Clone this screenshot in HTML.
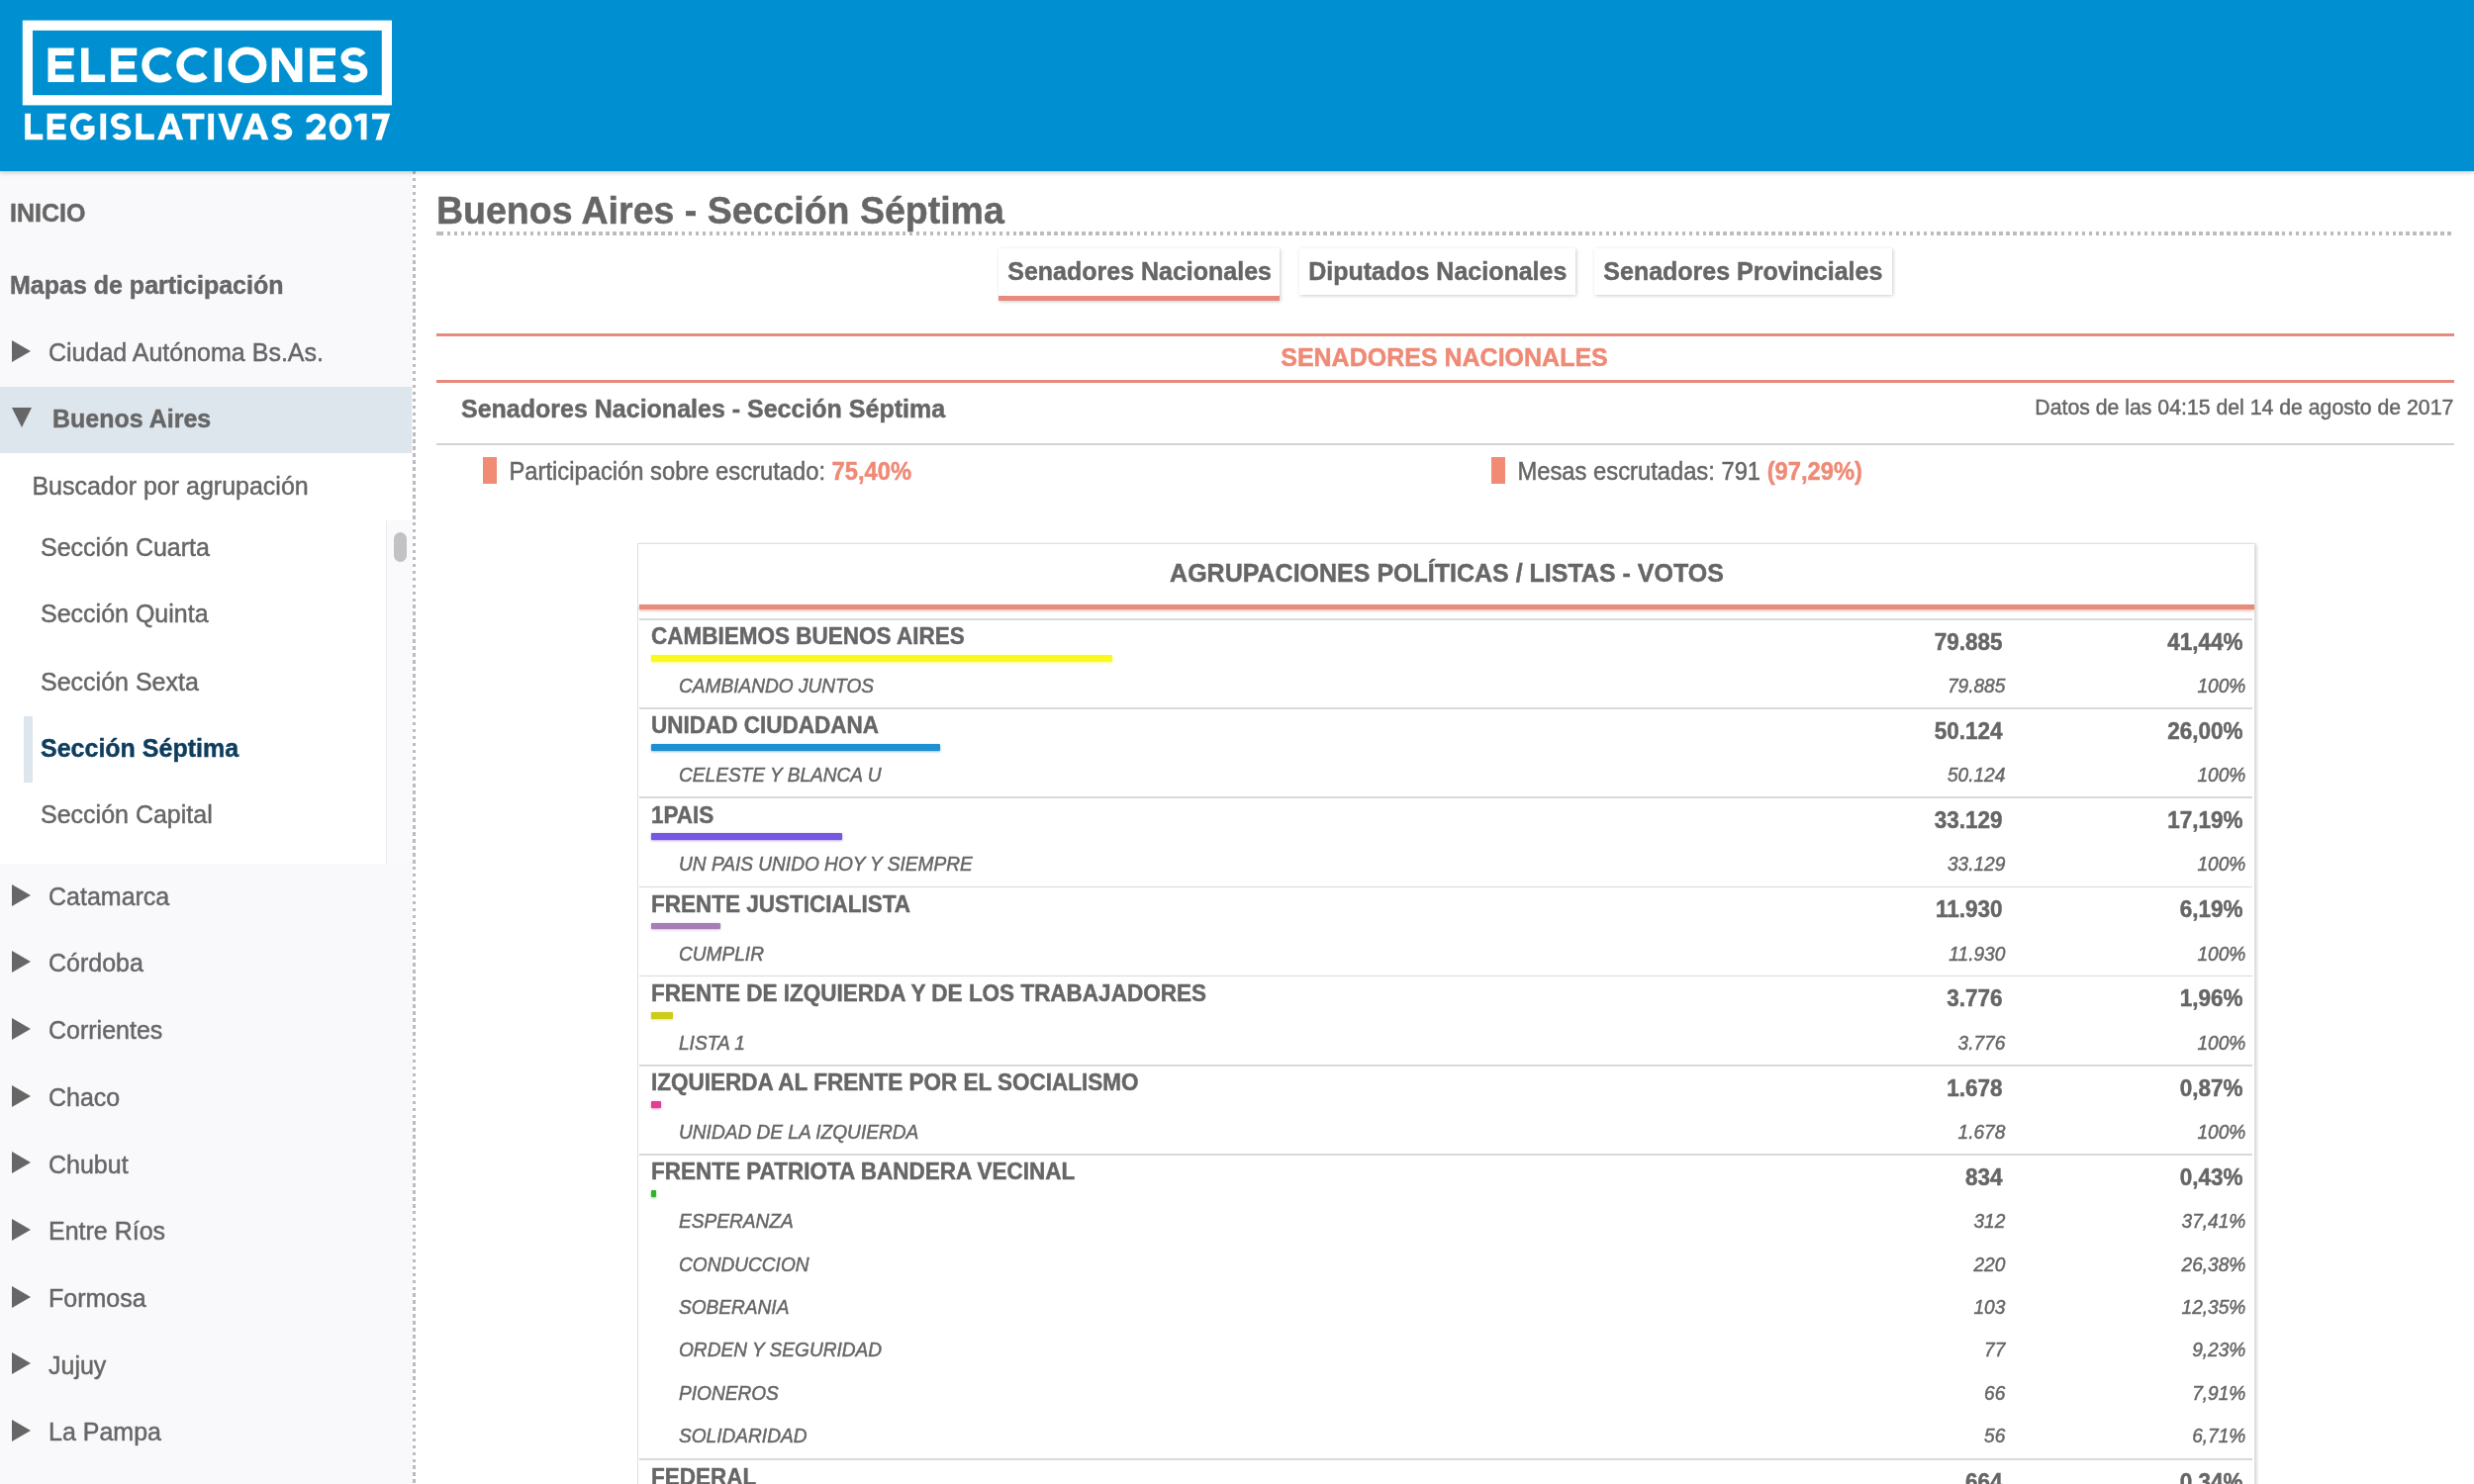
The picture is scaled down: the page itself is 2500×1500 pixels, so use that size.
<!DOCTYPE html>
<html><head><meta charset="utf-8"><title>Elecciones Legislativas 2017</title>
<style>
*{box-sizing:border-box;margin:0;padding:0}
html,body{width:2500px;height:1500px;overflow:hidden;background:#fff}
#wrap{position:absolute;left:0;top:0;width:2500px;height:1500px;overflow:hidden;will-change:transform;transform:translateZ(0)}
body{font-family:"Liberation Sans",sans-serif;color:#666666;position:relative}
.abs{position:absolute;white-space:pre}
.abs,.sb,.pv,.sec,.gname,.lname,.num,.inum,.tt{transform:scaleY(1.05);-webkit-text-stroke:0.45px}
.tt{display:inline-block}
#hdr{position:absolute;left:0;top:0;width:2500px;height:173px;background:#0090d1;box-shadow:0 1px 5px rgba(0,0,0,.25);z-index:5}
#side{position:absolute;left:0;top:173px;width:416.6px;height:1327px;background:#f9f8fb}
#sdot{position:absolute;left:416.6px;top:172.5px;width:3.5px;height:1330px;background:repeating-linear-gradient(to bottom,#bcbbbf 0,#bcbbbf 3.5px,transparent 3.5px,transparent 6.96px)}
.sb{position:absolute;left:10px;font-size:25px;font-weight:bold;height:40px;line-height:40px;white-space:pre}
.pv{position:absolute;left:49px;font-size:25px;height:40px;line-height:40px;white-space:pre}
.tri{position:absolute;left:11.8px;width:0;height:0;border-left:19px solid #666;border-top:11.4px solid transparent;border-bottom:11.4px solid transparent}
.sec{position:absolute;left:41px;font-size:25px;height:40px;line-height:40px;white-space:pre}
#sub{position:absolute;left:0;top:458px;width:416px;height:415px;background:#fff}
#track{position:absolute;left:390px;top:526px;width:26.6px;height:347px;background:#faf9fb;border-left:1.8px solid #eae9ed}
#thumb{position:absolute;left:397.6px;top:537.7px;width:13.4px;height:30px;border-radius:6.7px;background:#c2c1c6}
#main{position:absolute;left:441px;top:173px;width:2037px}
.tab{position:absolute;top:250.5px;height:47.8px;line-height:47.4px;background:#fff;font-size:25px;font-weight:bold;text-align:center;box-shadow:1px 1px 3.5px rgba(0,0,0,.2);white-space:pre}
.sline{position:absolute;left:441px;width:2038.5px;height:3.2px;background:#e68a7c}
.gname{position:absolute;left:658px;font-size:22.5px;font-weight:bold;height:30px;line-height:30px;white-space:pre}
.lname{position:absolute;left:686px;font-size:19.1px;font-style:italic;height:30px;line-height:30px;white-space:pre}
.num{position:absolute;font-size:22.5px;font-weight:bold;height:30px;line-height:30px;white-space:pre;text-align:right;width:200px}
.inum{position:absolute;font-size:19.1px;font-style:italic;height:30px;line-height:30px;white-space:pre;text-align:right;width:200px}
.bar{position:absolute;left:657.6px;height:6.8px;border-radius:1px}
.gl{position:absolute;left:645.5px;width:1630.5px;height:1.7px;background:#d9d9dd}
</style></head>
<body>
<div id="wrap">
<div id="hdr"><svg width="420" height="173" viewBox="0 0 420 173" style="position:absolute;left:0;top:0;filter:blur(0.6px)"><rect x="27.9" y="25.7" width="363" height="75.6" fill="none" stroke="#fff" stroke-width="10.2"/><path fill="none" stroke="#fff" stroke-width="7.4" stroke-linejoin="miter" d="M74.7 52.2H52.2V79.2H74.7M52.2 65.7H72.34"/><path fill="none" stroke="#fff" stroke-width="7.4" d="M85.8 48.5V79.2H106.1"/><path fill="none" stroke="#fff" stroke-width="7.4" stroke-linejoin="miter" d="M138.3 52.2H115.9V79.2H138.3M115.9 65.7H135.95"/><path fill="none" stroke="#fff" stroke-width="7.4" d="M171.5 55.39A14.57 14.1 0 1 0 171.5 76.01"/><path fill="none" stroke="#fff" stroke-width="7.4" d="M207.3 55.39A15.04 14.1 0 1 0 207.3 76.01"/><path fill="none" stroke="#fff" stroke-width="7.4" d="M220.4 48.5V82.9"/><ellipse fill="none" stroke="#fff" stroke-width="7.4" cx="249.95" cy="65.7" rx="15.75" ry="14.5"/><path fill="#fff" d="M274.7 48.5H283.41L298 71.55V48.5H305.4V82.9H296.69L282.1 59.85V82.9H274.7Z"/><path fill="none" stroke="#fff" stroke-width="7.4" stroke-linejoin="miter" d="M339 52.2H316.9V79.2H339M316.9 65.7H336.68"/><path fill="none" stroke="#fff" stroke-width="7.4" d="M366.38 55.64A9.55 7.05 0 1 0 357.95 65.7A9.55 7.05 0 1 1 349.52 75.76"/><svg x="0" y="110" width="420" height="31.4" viewBox="0 110 420 31.4" overflow="hidden"><path fill="none" stroke="#fff" stroke-width="5.8" d="M28.1 114.8V138.5H43.3"/><path fill="none" stroke="#fff" stroke-width="5.8" stroke-linejoin="miter" d="M66.7 117.7H50.5V138.5H66.7M50.5 128.1H64.98"/><path fill="none" stroke="#fff" stroke-width="5.8" stroke-linejoin="miter" d="M91.47 120.74A10.14 11 0 1 0 92.6 134.15V129.84H84.44"/><path fill="none" stroke="#fff" stroke-width="5.8" d="M104.3 114.8V141.4"/><path fill="none" stroke="#fff" stroke-width="5.8" d="M128.47 120.32A7.1 5.5 0 1 0 122.2 128.1A7.1 5.5 0 1 1 115.93 135.88"/><path fill="none" stroke="#fff" stroke-width="5.8" d="M140.2 114.8V138.5H155.8"/><path fill="#fff" fill-rule="evenodd" d="M158.9 141.4H165.4L172.1 121.98L178.8 141.4H185.3L175.15 114.8H169.06Z"/><path fill="#fff" d="M167.51 130.76H176.69L178.57 135.69H165.63Z"/><path fill="none" stroke="#fff" stroke-width="5.8" d="M184.1 117.7H206.5M195.3 117.7V141.4"/><path fill="none" stroke="#fff" stroke-width="5.8" d="M213.2 114.8V141.4"/><path fill="#fff" d="M220.2 114.8H226.7L232.8 134.22L238.9 114.8H245.4L235.84 141.4H229.76Z"/><path fill="#fff" fill-rule="evenodd" d="M244.8 141.4H251.3L258.1 121.98L264.9 141.4H271.4L261.15 114.8H255.06Z"/><path fill="#fff" d="M253.45 130.76H262.75L264.65 135.69H251.55Z"/><path fill="none" stroke="#fff" stroke-width="5.8" d="M291.35 120.32A7.25 5.5 0 1 0 284.95 128.1A7.25 5.5 0 1 1 278.55 135.88"/><path fill="none" stroke="#fff" stroke-width="5.8" d="M312.2 123.51A7 5.81 0 1 1 325.54 125.97Q324.04 128.47 312.9 140.2"/><path fill="none" stroke="#fff" stroke-width="5.8" d="M309.6 138.5H329.1"/><ellipse fill="none" stroke="#fff" stroke-width="5.8" cx="344.05" cy="128.1" rx="8.45" ry="10.8"/><path fill="none" stroke="#fff" stroke-width="5.8" stroke-linejoin="miter" d="M358.9 120.7L364.7 117.7H367.6V141.4"/><path fill="none" stroke="#fff" stroke-width="5.8" stroke-linejoin="miter" d="M376 117.7H390.25L381.58 144.4"/></svg></svg></div>
<div id="side"></div><div id="sdot"></div>
<div class="sb" style="top:195.0px">INICIO</div>
<div class="sb" style="top:268.0px">Mapas de participación</div>
<div class="tri" style="top:343.6px"></div><div class="pv" style="top:336.0px">Ciudad Autónoma Bs.As.</div>
<div style="position:absolute;left:0;top:391px;width:416px;height:67px;background:#dde5ed"></div>
<div style="position:absolute;left:11.8px;top:411.8px;width:0;height:0;border-top:20.3px solid #666;border-left:10.4px solid transparent;border-right:10.4px solid transparent"></div>
<div class="pv" style="left:53px;font-weight:bold;top:403.3px">Buenos Aires</div>
<div id="sub"></div><div id="track"></div><div id="thumb"></div>
<div class="sec" style="left:32.4px;top:470.5px">Buscador por agrupación</div>
<div class="sec" style="top:533.1px">Sección Cuarta</div>
<div class="sec" style="top:600.3px">Sección Quinta</div>
<div class="sec" style="top:668.5px">Sección Sexta</div>
<div style="position:absolute;left:24px;top:724px;width:9px;height:67px;background:#dde5ed"></div>
<div class="sec" style="top:736.2px;font-weight:bold;color:#0e3d5e">Sección Séptima</div>
<div class="sec" style="top:803.2px">Sección Capital</div>
<div class="tri" style="top:893.5000000000001px"></div><div class="pv" style="top:885.7px">Catamarca</div>
<div class="tri" style="top:961.2000000000002px"></div><div class="pv" style="top:953.4000000000001px">Córdoba</div>
<div class="tri" style="top:1028.9px"></div><div class="pv" style="top:1021.1000000000001px">Corrientes</div>
<div class="tri" style="top:1096.6000000000001px"></div><div class="pv" style="top:1088.8000000000002px">Chaco</div>
<div class="tri" style="top:1164.3px"></div><div class="pv" style="top:1156.5px">Chubut</div>
<div class="tri" style="top:1232.0px"></div><div class="pv" style="top:1224.2px">Entre Ríos</div>
<div class="tri" style="top:1299.7px"></div><div class="pv" style="top:1291.9px">Formosa</div>
<div class="tri" style="top:1367.4px"></div><div class="pv" style="top:1359.6000000000001px">Jujuy</div>
<div class="tri" style="top:1435.1000000000001px"></div><div class="pv" style="top:1427.3000000000002px">La Pampa</div>
<div class="abs" style="left:441px;top:186.5px;height:50px;line-height:50px;font-size:37.5px;font-weight:bold">Buenos Aires - Sección Séptima</div>
<div style="position:absolute;left:444.5px;top:234.3px;width:2035px;height:3.6px;background:repeating-linear-gradient(to right,#bcbbbf 0,#bcbbbf 3.5px,transparent 3.5px,transparent 6.97px)"></div><div style="position:absolute;left:441.2px;top:234.3px;width:4px;height:3.6px;background:#bcbbbf"></div>
<div class="tab" style="left:1008.8px;width:284.7px;height:53.2px;padding-left:1px;border-bottom:5.4px solid #e88a80"><span class="tt">Senadores Nacionales</span></div>
<div class="tab" style="left:1313.2px;width:279.2px"><span class="tt">Diputados Nacionales</span></div>
<div class="tab" style="left:1610.6px;width:301.5px"><span class="tt">Senadores Provinciales</span></div>
<div class="sline" style="top:337px"></div><div class="sline" style="top:384px"></div>
<div class="abs" style="left:441px;width:2037px;text-align:center;top:341px;height:40px;line-height:40px;font-size:25px;font-weight:bold;color:#ef8a76">SENADORES NACIONALES</div>
<div class="abs" style="left:466px;top:392.6px;height:40px;line-height:40px;font-size:25px;font-weight:bold">Senadores Nacionales - Sección Séptima</div>
<div class="abs" style="left:1979.3px;width:500px;text-align:right;top:391.5px;height:40px;line-height:40px;font-size:21.25px">Datos de las 04:15 del 14 de agosto de 2017</div>
<div style="position:absolute;left:441px;top:448px;width:2038.5px;height:1.8px;background:#d3d3d6"></div>
<div style="position:absolute;left:488px;top:462.3px;width:14px;height:27px;background:#f18b73"></div>
<div class="abs" style="left:514.5px;top:456.7px;height:40px;line-height:40px;font-size:23.75px">Participación sobre escrutado: <b style="color:#ef8a76">75,40%</b></div>
<div style="position:absolute;left:1507px;top:462.3px;width:14px;height:27px;background:#f18b73"></div>
<div class="abs" style="left:1533.5px;top:456.7px;height:40px;line-height:40px;font-size:23.75px">Mesas escrutadas: 791 <b style="color:#ef8a76">(97,29%)</b></div>
<div style="position:absolute;left:644.2px;top:548.8px;width:1634.6px;height:1000px;border:1.7px solid #dedee2;box-shadow:1.5px 1px 3px rgba(0,0,20,.16)"></div>
<div class="abs" style="left:646px;width:1632px;text-align:center;top:558.7px;height:40px;line-height:40px;font-size:25px;font-weight:bold">AGRUPACIONES POLÍTICAS / LISTAS - VOTOS</div>
<div style="position:absolute;left:646px;top:610.9px;width:1631.5px;height:4.8px;background:#e38d7a;box-shadow:0 1.5px 2.5px rgba(240,140,125,.55)"></div>
<div class="gl" style="top:625.0px"></div>
<div class="gname" style="top:629.2px">CAMBIEMOS BUENOS AIRES</div>
<div class="bar" style="top:662.0px;width:466.4px;background:#fbf81f;box-shadow:0 0.8px 2.5px rgba(251,248,31,.6)"></div>
<div class="num" style="left:1823.6px;top:634.6px">79.885</div>
<div class="num" style="left:2066.5px;top:634.6px">41,44%</div>
<div class="lname" style="top:679.0px">CAMBIANDO JUNTOS</div>
<div class="inum" style="left:1826.3px;top:679.0px">79.885</div>
<div class="inum" style="left:2069.3px;top:679.0px">100%</div>
<div class="gl" style="top:715.2px"></div>
<div class="gname" style="top:719.4px">UNIDAD CIUDADANA</div>
<div class="bar" style="top:752.2px;width:292.8px;background:#1e90d2;box-shadow:0 0.8px 2.5px rgba(30,144,210,.6)"></div>
<div class="num" style="left:1823.6px;top:724.8px">50.124</div>
<div class="num" style="left:2066.5px;top:724.8px">26,00%</div>
<div class="lname" style="top:769.2px">CELESTE Y BLANCA U</div>
<div class="inum" style="left:1826.3px;top:769.2px">50.124</div>
<div class="inum" style="left:2069.3px;top:769.2px">100%</div>
<div class="gl" style="top:805.4px"></div>
<div class="gname" style="top:809.6px">1PAIS</div>
<div class="bar" style="top:842.4px;width:193.8px;background:#7657e0;box-shadow:0 0.8px 2.5px rgba(118,87,224,.6)"></div>
<div class="num" style="left:1823.6px;top:815.0px">33.129</div>
<div class="num" style="left:2066.5px;top:815.0px">17,19%</div>
<div class="lname" style="top:859.4px">UN PAIS UNIDO HOY Y SIEMPRE</div>
<div class="inum" style="left:1826.3px;top:859.4px">33.129</div>
<div class="inum" style="left:2069.3px;top:859.4px">100%</div>
<div class="gl" style="top:895.6px"></div>
<div class="gname" style="top:899.8px">FRENTE JUSTICIALISTA</div>
<div class="bar" style="top:932.6px;width:70.2px;background:#a77db6;box-shadow:0 0.8px 2.5px rgba(167,125,182,.6)"></div>
<div class="num" style="left:1823.6px;top:905.2px">11.930</div>
<div class="num" style="left:2066.5px;top:905.2px">6,19%</div>
<div class="lname" style="top:949.6px">CUMPLIR</div>
<div class="inum" style="left:1826.3px;top:949.6px">11.930</div>
<div class="inum" style="left:2069.3px;top:949.6px">100%</div>
<div class="gl" style="top:985.8px"></div>
<div class="gname" style="top:990.0px">FRENTE DE IZQUIERDA Y DE LOS TRABAJADORES</div>
<div class="bar" style="top:1022.8px;width:22.6px;background:#cdcb1e;box-shadow:0 0.8px 2.5px rgba(205,203,30,.6)"></div>
<div class="num" style="left:1823.6px;top:995.4px">3.776</div>
<div class="num" style="left:2066.5px;top:995.4px">1,96%</div>
<div class="lname" style="top:1039.8px">LISTA 1</div>
<div class="inum" style="left:1826.3px;top:1039.8px">3.776</div>
<div class="inum" style="left:2069.3px;top:1039.8px">100%</div>
<div class="gl" style="top:1076.0px"></div>
<div class="gname" style="top:1080.2px">IZQUIERDA AL FRENTE POR EL SOCIALISMO</div>
<div class="bar" style="top:1113.0px;width:10.4px;background:#e03f92;box-shadow:0 0.8px 2.5px rgba(224,63,146,.6)"></div>
<div class="num" style="left:1823.6px;top:1085.6px">1.678</div>
<div class="num" style="left:2066.5px;top:1085.6px">0,87%</div>
<div class="lname" style="top:1130.0px">UNIDAD DE LA IZQUIERDA</div>
<div class="inum" style="left:1826.3px;top:1130.0px">1.678</div>
<div class="inum" style="left:2069.3px;top:1130.0px">100%</div>
<div class="gl" style="top:1166.2px"></div>
<div class="gname" style="top:1170.4px">FRENTE PATRIOTA BANDERA VECINAL</div>
<div class="bar" style="top:1203.2px;width:5.4px;background:#2fb42c;box-shadow:0 0.8px 2.5px rgba(47,180,44,.6)"></div>
<div class="num" style="left:1823.6px;top:1175.8px">834</div>
<div class="num" style="left:2066.5px;top:1175.8px">0,43%</div>
<div class="lname" style="top:1220.2px">ESPERANZA</div>
<div class="inum" style="left:1826.3px;top:1220.2px">312</div>
<div class="inum" style="left:2069.3px;top:1220.2px">37,41%</div>
<div class="lname" style="top:1263.6px">CONDUCCION</div>
<div class="inum" style="left:1826.3px;top:1263.6px">220</div>
<div class="inum" style="left:2069.3px;top:1263.6px">26,38%</div>
<div class="lname" style="top:1307.0px">SOBERANIA</div>
<div class="inum" style="left:1826.3px;top:1307.0px">103</div>
<div class="inum" style="left:2069.3px;top:1307.0px">12,35%</div>
<div class="lname" style="top:1350.4px">ORDEN Y SEGURIDAD</div>
<div class="inum" style="left:1826.3px;top:1350.4px">77</div>
<div class="inum" style="left:2069.3px;top:1350.4px">9,23%</div>
<div class="lname" style="top:1393.8px">PIONEROS</div>
<div class="inum" style="left:1826.3px;top:1393.8px">66</div>
<div class="inum" style="left:2069.3px;top:1393.8px">7,91%</div>
<div class="lname" style="top:1437.2px">SOLIDARIDAD</div>
<div class="inum" style="left:1826.3px;top:1437.2px">56</div>
<div class="inum" style="left:2069.3px;top:1437.2px">6,71%</div>
<div class="gl" style="top:1474.4px"></div>
<div class="gname" style="top:1478.6px">FEDERAL</div>
<div class="bar" style="top:1511.4px;width:4.4px;background:#888888;box-shadow:0 0.8px 2.5px rgba(136,136,136,.6)"></div>
<div class="num" style="left:1823.6px;top:1484.0px">664</div>
<div class="num" style="left:2066.5px;top:1484.0px">0,34%</div>
</div>
</body></html>
